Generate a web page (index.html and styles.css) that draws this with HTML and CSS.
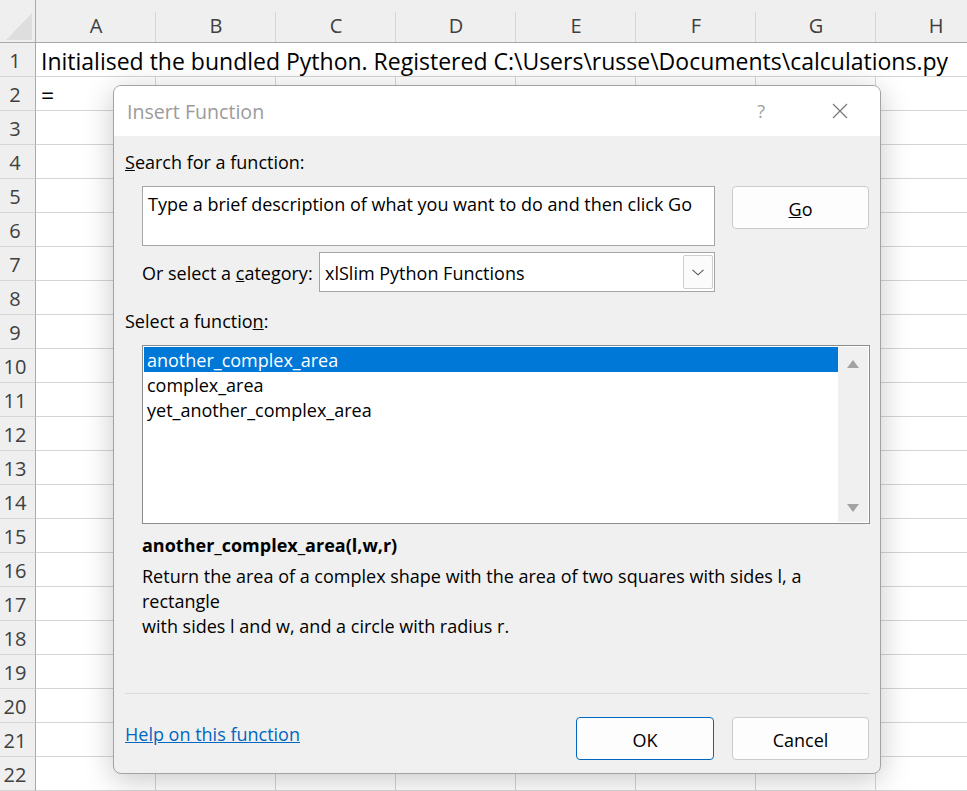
FILE: index.html
```html
<!DOCTYPE html>
<html lang="en">
<head>
<meta charset="utf-8">
<title>Insert Function</title>
<link rel="stylesheet" href="styles.css">
</head>
<body>
<div class="sheet">
  <div class="corner"><svg class="corner-tri" width="27" height="27" viewBox="0 0 27 27"><polygon points="26,0 26,27 0,27" fill="#dedede"/></svg></div>
  <div class="colhead">A</div><div class="colhead">B</div><div class="colhead">C</div><div class="colhead">D</div><div class="colhead">E</div><div class="colhead">F</div><div class="colhead">G</div><div class="colhead">H</div>

  <div class="rowhead">1</div><div class="cell cell-span">Initialised the bundled Python. Registered C:\Users\russe\Documents\calculations.py</div>
  <div class="rowhead">2</div><div class="cell">=</div><div class="cell"></div><div class="cell"></div><div class="cell"></div><div class="cell"></div><div class="cell"></div><div class="cell"></div><div class="cell"></div>
  <div class="rowhead">3</div><div class="cell"></div><div class="cell"></div><div class="cell"></div><div class="cell"></div><div class="cell"></div><div class="cell"></div><div class="cell"></div><div class="cell"></div>
  <div class="rowhead">4</div><div class="cell"></div><div class="cell"></div><div class="cell"></div><div class="cell"></div><div class="cell"></div><div class="cell"></div><div class="cell"></div><div class="cell"></div>
  <div class="rowhead">5</div><div class="cell"></div><div class="cell"></div><div class="cell"></div><div class="cell"></div><div class="cell"></div><div class="cell"></div><div class="cell"></div><div class="cell"></div>
  <div class="rowhead">6</div><div class="cell"></div><div class="cell"></div><div class="cell"></div><div class="cell"></div><div class="cell"></div><div class="cell"></div><div class="cell"></div><div class="cell"></div>
  <div class="rowhead">7</div><div class="cell"></div><div class="cell"></div><div class="cell"></div><div class="cell"></div><div class="cell"></div><div class="cell"></div><div class="cell"></div><div class="cell"></div>
  <div class="rowhead">8</div><div class="cell"></div><div class="cell"></div><div class="cell"></div><div class="cell"></div><div class="cell"></div><div class="cell"></div><div class="cell"></div><div class="cell"></div>
  <div class="rowhead">9</div><div class="cell"></div><div class="cell"></div><div class="cell"></div><div class="cell"></div><div class="cell"></div><div class="cell"></div><div class="cell"></div><div class="cell"></div>
  <div class="rowhead">10</div><div class="cell"></div><div class="cell"></div><div class="cell"></div><div class="cell"></div><div class="cell"></div><div class="cell"></div><div class="cell"></div><div class="cell"></div>
  <div class="rowhead">11</div><div class="cell"></div><div class="cell"></div><div class="cell"></div><div class="cell"></div><div class="cell"></div><div class="cell"></div><div class="cell"></div><div class="cell"></div>
  <div class="rowhead">12</div><div class="cell"></div><div class="cell"></div><div class="cell"></div><div class="cell"></div><div class="cell"></div><div class="cell"></div><div class="cell"></div><div class="cell"></div>
  <div class="rowhead">13</div><div class="cell"></div><div class="cell"></div><div class="cell"></div><div class="cell"></div><div class="cell"></div><div class="cell"></div><div class="cell"></div><div class="cell"></div>
  <div class="rowhead">14</div><div class="cell"></div><div class="cell"></div><div class="cell"></div><div class="cell"></div><div class="cell"></div><div class="cell"></div><div class="cell"></div><div class="cell"></div>
  <div class="rowhead">15</div><div class="cell"></div><div class="cell"></div><div class="cell"></div><div class="cell"></div><div class="cell"></div><div class="cell"></div><div class="cell"></div><div class="cell"></div>
  <div class="rowhead">16</div><div class="cell"></div><div class="cell"></div><div class="cell"></div><div class="cell"></div><div class="cell"></div><div class="cell"></div><div class="cell"></div><div class="cell"></div>
  <div class="rowhead">17</div><div class="cell"></div><div class="cell"></div><div class="cell"></div><div class="cell"></div><div class="cell"></div><div class="cell"></div><div class="cell"></div><div class="cell"></div>
  <div class="rowhead">18</div><div class="cell"></div><div class="cell"></div><div class="cell"></div><div class="cell"></div><div class="cell"></div><div class="cell"></div><div class="cell"></div><div class="cell"></div>
  <div class="rowhead">19</div><div class="cell"></div><div class="cell"></div><div class="cell"></div><div class="cell"></div><div class="cell"></div><div class="cell"></div><div class="cell"></div><div class="cell"></div>
  <div class="rowhead">20</div><div class="cell"></div><div class="cell"></div><div class="cell"></div><div class="cell"></div><div class="cell"></div><div class="cell"></div><div class="cell"></div><div class="cell"></div>
  <div class="rowhead">21</div><div class="cell"></div><div class="cell"></div><div class="cell"></div><div class="cell"></div><div class="cell"></div><div class="cell"></div><div class="cell"></div><div class="cell"></div>
  <div class="rowhead">22</div><div class="cell"></div><div class="cell"></div><div class="cell"></div><div class="cell"></div><div class="cell"></div><div class="cell"></div><div class="cell"></div><div class="cell"></div>
</div>

<div class="dialog">
  <div class="titlebar">
    <span class="title">Insert Function</span>
    <span class="help-q">?</span>
    <svg class="close-x" width="16" height="16" viewBox="0 0 16 16"><path d="M1 1 L15 15 M15 1 L1 15" stroke="#7a7a7a" stroke-width="1.3" fill="none"/></svg>
  </div>
  <div class="body">
    <div class="label"><u>S</u>earch for a function:</div>
    <div class="search-row">
      <div class="textbox">Type a brief description of what you want to do and then click Go</div>
      <div class="btn btn-go"><u>G</u>o</div>
    </div>
    <div class="category-row">
      <div class="cat-label">Or select a <u>c</u>ategory:</div>
      <div class="select">
        <span class="select-text">xlSlim Python Functions</span>
        <span class="select-btn"><svg width="12" height="7" viewBox="0 0 12 7"><path d="M0.5 0.8 L6 5.8 L11.5 0.8" stroke="#555" stroke-width="1.1" fill="none"/></svg></span>
      </div>
    </div>
    <div class="label label-fn">Select a functio<u>n</u>:</div>
    <div class="listbox">
      <div class="items">
        <div class="item selected">another_complex_area</div>
        <div class="item">complex_area</div>
        <div class="item">yet_another_complex_area</div>
      </div>
      <div class="scrollbar">
        <svg width="12" height="8" viewBox="0 0 12 8"><polygon points="6,0 12,8 0,8" fill="#a3a3a3"/></svg>
        <svg width="12" height="8" viewBox="0 0 12 8"><polygon points="0,0 12,0 6,8" fill="#a3a3a3"/></svg>
      </div>
    </div>
    <div class="fname">another_complex_area(l,w,r)</div>
    <div class="desc">Return the area of a complex shape with the area of two squares with sides l, a<br>rectangle<br>with sides l and w, and a circle with radius r.</div>
    <div class="separator"></div>
    <div class="footer">
      <a class="helplink" href="#">Help on this function</a>
      <div class="btn btn-ok">OK</div>
      <div class="btn btn-cancel">Cancel</div>
    </div>
  </div>
</div>
</body>
</html>
```

FILE: styles.css
```css
html, body {
  margin: 0;
  padding: 0;
  width: 967px;
  height: 791px;
  overflow: hidden;
  background: #ffffff;
  font-family: "Open Sans", "Noto Sans", sans-serif;
}

.sheet {
  display: grid;
  grid-template-columns: 36px repeat(8, 120px);
  grid-template-rows: 43px;
  grid-auto-rows: 34px;
  width: 1000px;
}

.corner {
  background: #efefef;
  border-right: 1px solid #a9a9a9;
  border-bottom: 1px solid #a9a9a9;
  box-sizing: border-box;
  display: flex;
  align-items: flex-end;
  justify-content: flex-end;
  padding: 0 2px 2px 0;
}
.corner-tri { display: block; }

.colhead {
  background: #efefef linear-gradient(#d5d5d5, #d5d5d5) right bottom / 1px 30px no-repeat;
  border-bottom: 1px solid #a9a9a9;
  box-sizing: border-box;
  display: flex;
  align-items: center;
  justify-content: center;
  padding-top: 8px;
  font-size: 20px;
  color: #404040;
}

.rowhead {
  background: #efefef;
  border-right: 1px solid #a9a9a9;
  border-bottom: 1px solid #d5d5d5;
  box-sizing: border-box;
  display: flex;
  align-items: center;
  justify-content: center;
  padding-right: 5px;
  padding-top: 2px;
  font-size: 20px;
  color: #404040;
}

.cell {
  border-right: 1px solid #d5d5d5;
  border-bottom: 1px solid #d5d5d5;
  box-sizing: border-box;
  display: flex;
  align-items: flex-end;
  padding: 0 0 0 5px;
  line-height: 30px;
  font-size: 23px;
  color: #000;
  white-space: nowrap;
}
.cell-span {
  grid-column: 2 / -1;
  border-right: none;
}

/* Dialog */
.dialog {
  position: absolute;
  left: 113px;
  top: 85px;
  width: 768px;
  height: 689px;
  box-sizing: border-box;
  border: 1px solid #a3a3a3;
  border-radius: 8px;
  background: #f0f0f0;
  overflow: hidden;
  box-shadow: 0 6px 30px rgba(0, 0, 0, 0.22);
  font-size: 18px;
  color: #000;
}

.titlebar {
  height: 50px;
  background: #ffffff;
  display: flex;
  align-items: center;
  padding: 0 0 0 13px;
}
.title {
  font-size: 19.6px;
  color: #9b9b9b;
  flex: 1;
}
.help-q {
  font-size: 18px;
  color: #a0a0a0;
  margin-right: 67px;
}
.close-x {
  margin-right: 32px;
}

.body {
  padding: 14px 11px 0 11px;
}

.label {
  line-height: 24px;
  height: 24px;
}

.search-row {
  display: flex;
  align-items: flex-start;
  margin-top: 12px;
  padding-left: 17px;
}
.textbox {
  width: 573px;
  height: 60px;
  box-sizing: border-box;
  border: 1px solid #a6a6a6;
  background: #fff;
  padding: 5px 5px 3px;
  line-height: 24px;
  white-space: nowrap;
}

.btn {
  box-sizing: border-box;
  height: 43px;
  border: 1px solid #cbcbcb;
  border-radius: 4px;
  background: #fdfdfd;
  display: flex;
  align-items: center;
  justify-content: center;
  padding-top: 2px;
}
.btn-go {
  width: 137px;
  margin-left: 17px;
}

.category-row {
  display: flex;
  align-items: center;
  margin-top: 6px;
  padding-left: 17px;
}
.cat-label {
  width: 177px;
  padding-top: 2px;
}
.select {
  width: 396px;
  height: 40px;
  box-sizing: border-box;
  border: 1px solid #a6a6a6;
  background: #fff;
  display: flex;
  align-items: center;
  padding: 0 1px 0 5px;
}
.select-text {
  flex: 1;
  padding-top: 2px;
}
.select-btn {
  width: 30px;
  height: 34px;
  box-sizing: border-box;
  border: 1px solid #cfcfcf;
  border-radius: 2px;
  background: #fbfbfb;
  display: flex;
  align-items: center;
  justify-content: center;
}
.select-btn svg { display: block; }

.label-fn {
  margin-top: 17px;
}

.listbox {
  margin: 12px 0 0 17px;
  width: 728px;
  height: 179px;
  box-sizing: border-box;
  border: 1px solid #8c8c8c;
  background: #fff;
  padding: 1px;
  display: flex;
}
.items {
  flex: 1;
}
.item {
  height: 25px;
  line-height: 26px;
  padding-left: 3px;
}
.item.selected {
  background: #0078d7;
  color: #fff;
}
.scrollbar {
  width: 30px;
  background: #f0f0f0;
  display: flex;
  flex-direction: column;
  align-items: center;
  justify-content: space-between;
  padding: 13px 0 10px;
  box-sizing: border-box;
}
.scrollbar svg { display: block; }

.fname {
  margin-top: 8px;
  padding-left: 17px;
  font-weight: bold;
  line-height: 26px;
}
.desc {
  margin-top: 6px;
  padding-left: 17px;
  line-height: 25px;
  white-space: nowrap;
}

.separator {
  margin-top: 54px;
  height: 1px;
  background: #dadada;
}

.footer {
  display: flex;
  align-items: center;
  margin-top: 23px;
}
.helplink {
  flex: 1;
  color: #0067c0;
  text-decoration: underline;
  margin-bottom: 10px;
}
.btn-ok {
  width: 138px;
  border-color: #0067c0;
}
.btn-cancel {
  width: 137px;
  margin-left: 18px;
}
```
